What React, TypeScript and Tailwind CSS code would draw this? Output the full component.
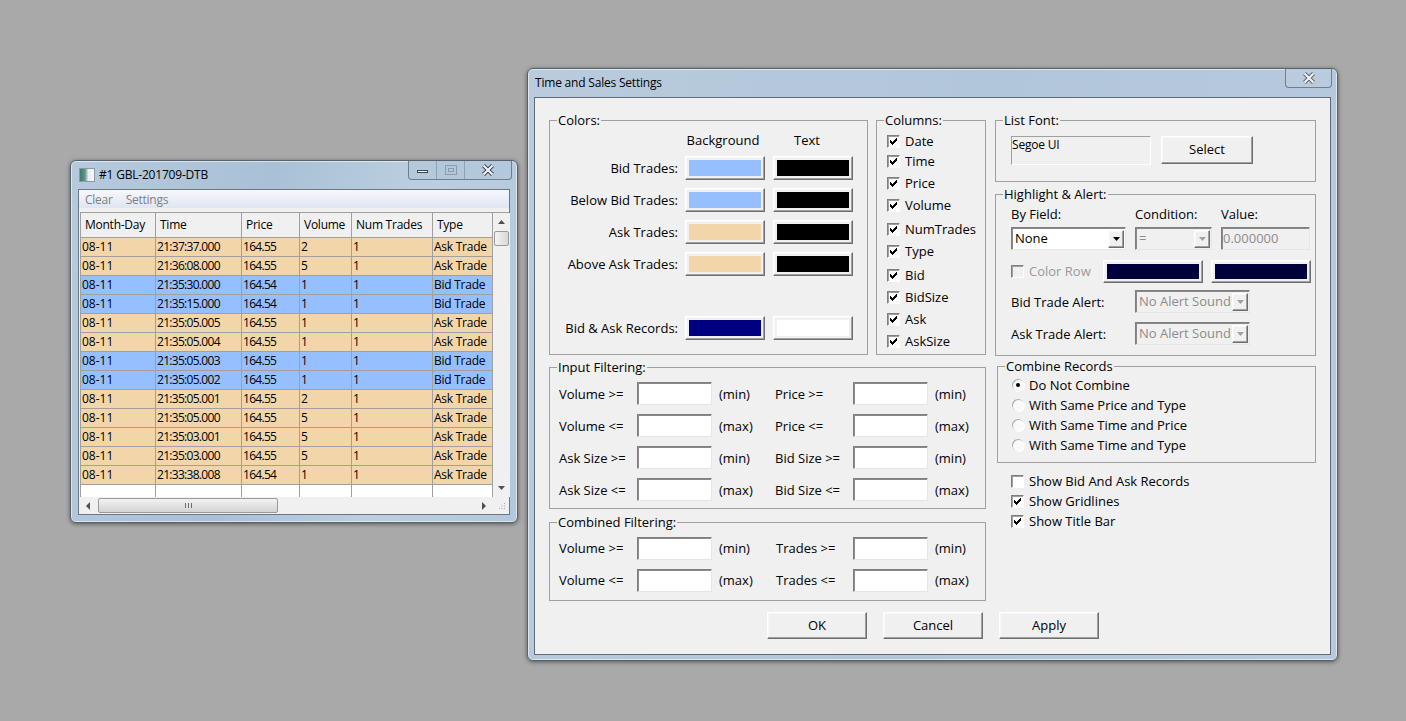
import React from 'react';

const ROWS = [
  ['08-11', '21:37:37.000', '164.55', '2', 'Ask Trade'],
  ['08-11', '21:36:08.000', '164.55', '5', 'Ask Trade'],
  ['08-11', '21:35:30.000', '164.54', '1', 'Bid Trade'],
  ['08-11', '21:35:15.000', '164.54', '1', 'Bid Trade'],
  ['08-11', '21:35:05.005', '164.55', '1', 'Ask Trade'],
  ['08-11', '21:35:05.004', '164.55', '1', 'Ask Trade'],
  ['08-11', '21:35:05.003', '164.55', '1', 'Bid Trade'],
  ['08-11', '21:35:05.002', '164.55', '1', 'Bid Trade'],
  ['08-11', '21:35:05.001', '164.55', '2', 'Ask Trade'],
  ['08-11', '21:35:05.000', '164.55', '5', 'Ask Trade'],
  ['08-11', '21:35:03.001', '164.55', '5', 'Ask Trade'],
  ['08-11', '21:35:03.000', '164.55', '5', 'Ask Trade'],
  ['08-11', '21:33:38.008', '164.54', '1', 'Ask Trade'],
];

const raised = 'border border-t-white border-l-white border-r-[#6e6e6e] border-b-[#6e6e6e] shadow-[inset_-1px_-1px_0_#a0a0a0,inset_1px_1px_0_#f8f8f8]';
const sunken = 'border border-t-[#7f7f7f] border-l-[#7f7f7f] border-r-[#e6e6e6] border-b-[#e6e6e6] shadow-[inset_1px_1px_0_#8a8a8a]';

function Group({ title, className, children }: { title: string; className: string; children?: React.ReactNode }) {
  return (
    <div className={`relative border border-[#a0a0a0] ${className}`}>
      <span className="absolute -top-[10px] left-[7px] bg-[#f0f0f0] px-[1px] leading-[18px]">{title}</span>
      {children}
    </div>
  );
}

function CheckBox({ on, disabled }: { on?: boolean; disabled?: boolean }) {
  return (
    <span className={`flex h-[13px] w-[13px] flex-none items-center justify-center border border-t-[#7f7f7f] border-l-[#7f7f7f] border-r-white border-b-white shadow-[inset_1px_1px_0_#a0a0a0] ${disabled ? 'bg-[#f0f0f0]' : 'bg-white'}`}>
      {on && (
        <svg width="9" height="9" viewBox="0 0 9 9" shapeRendering="crispEdges">
          <path d="M1 3 H2 V4 H3 V5 H4 V4 H5 V3 H6 V2 H7 V1 H8 V4 H7 V5 H6 V6 H5 V7 H4 V8 H3 V7 H2 V6 H1 Z" fill="#000" />
        </svg>
      )}
    </span>
  );
}

function CheckRow({ label, on, className }: { label: string; on?: boolean; className?: string }) {
  return (
    <div className={`flex h-[20px] items-center ${className ?? ''}`}>
      <CheckBox on={on} />
      <span className="ml-[5px] pt-[2px]">{label}</span>
    </div>
  );
}

function Radio({ label, on }: { label: string; on?: boolean }) {
  return (
    <div className="flex h-[20px] items-center">
      <span className="flex h-[12px] w-[12px] flex-none items-center justify-center rounded-full bg-[#fafafa] shadow-[inset_1px_1px_0_#b0b0b0,1px_1px_0_#ffffff]">
        {on && <span className="h-[4px] w-[4px] rounded-full bg-black" />}
      </span>
      <span className="ml-[5px] pt-[2px]">{label}</span>
    </div>
  );
}

function Swatch({ color, className }: { color: string; className?: string }) {
  return (
    <div className={`flex h-[24px] w-[80px] flex-none items-center justify-center bg-[#f0f0f0] ${raised} ${className ?? ''}`}>
      <div className={`h-[16px] w-[72px] ${color}`} />
    </div>
  );
}

function Arrow({ color }: { color: string }) {
  return (
    <svg width="7" height="4" viewBox="0 0 7 4">
      <path d="M0 0 H7 L3.5 4 Z" fill={color} />
    </svg>
  );
}

function CloseGlyph({ edge }: { edge: string }) {
  return (
    <svg width="14" height="12" viewBox="0 0 14 12">
      <path d="M2.500 1.500 L11.500 10.500 M11.500 1.500 L2.500 10.500" stroke={edge} strokeWidth="4" />
      <path d="M2.500 1.500 L11.500 10.500 M11.500 1.500 L2.500 10.500" stroke="#f4f6f8" strokeWidth="2" />
    </svg>
  );
}

function Combo({ value, className, disabled }: { value: string; className: string; disabled?: boolean }) {
  return (
    <div className={`flex h-[23px] flex-none items-center justify-between p-[1px] pl-[3px] ${sunken} ${disabled ? 'bg-[#f0f0f0] text-[#8c8c8c]' : 'bg-white'} ${className}`}>
      <span className="truncate">{value}</span>
      <span className={`flex h-[18px] w-[16px] flex-none items-center justify-center bg-[#f0f0f0] ${raised}`}>
        <Arrow color={disabled ? '#a0a0a0' : '#000'} />
      </span>
    </div>
  );
}

function Input() {
  return <div className={`h-[23px] w-[75px] flex-none bg-white ${sunken}`} />;
}

function FilterRow({ a, b, unit, className, bClass, textClass = 'pt-[2px]' }: { a: string; b: string; unit: string; className?: string; bClass?: string; textClass?: string }) {
  return (
    <div className={`flex h-[23px] items-center ${className ?? ''}`}>
      <span className={`w-[78px] flex-none ${textClass}`}>{a}</span>
      <Input />
      <span className={`ml-[7px] w-[49px] flex-none ${textClass}`}>{unit}</span>
      <span className={`ml-[7px] w-[78px] flex-none ${textClass} ${bClass ?? ''}`}>{b}</span>
      <Input />
      <span className={`ml-[7px] ${textClass}`}>{unit}</span>
    </div>
  );
}

function ColorRow({ label, bg, fg, className }: { label: string; bg: string; fg: string; className?: string }) {
  return (
    <div className={`flex h-[24px] items-center ${className ?? ''}`}>
      <span className="w-[129px] flex-none pr-[1px] pt-[2px] text-right">{label}</span>
      <Swatch color={bg} className="ml-[6px]" />
      <Swatch color={fg} className="ml-[8px]" />
    </div>
  );
}

function TextButton({ label, className }: { label: string; className: string }) {
  return <div className={`flex flex-none items-center justify-center bg-[#f0f0f0] ${raised} ${className}`}>{label}</div>;
}

const COLS = ['w-[75px]', 'w-[86px]', 'w-[58px]', 'w-[52px]', 'w-[81px]', 'w-[60px]'];
const CELLS = ['', 'tracking-[-0.7px]', 'tracking-[-0.7px]', '', '', 'tracking-[-0.25px]'];
const HEADS = ['Month-Day', 'Time', 'Price', 'Volume', 'Num Trades', 'Type'];

function TradesWindow() {
  return (
    <div className="absolute left-[70px] top-[160px] flex h-[363px] w-[448px] flex-col rounded-[6px] border border-[#56626e] bg-[linear-gradient(100deg,#b7cadd,#a9c0d6_40%,#bccfe0_70%,#b3c8dc)] shadow-[0_1px_4px_rgba(0,0,0,0.5),inset_0_0_0_1px_rgba(255,255,255,0.55)]">
      <div className="flex h-[28px] flex-none items-center pl-[8px] pr-[5px] text-[12px] text-black">
        <div className="h-[14px] w-[16px] flex-none border border-[#8c99a5] bg-[linear-gradient(90deg,#3e7a6e_0%,#5f9486_35%,#e6eef2_60%,#f6f8f8_100%)]" />
        <span className="ml-[4px] mb-[1px] tracking-[-0.2px]">#1 GBL-201709-DTB</span>
        <div className="ml-auto flex h-[19px] w-[104px] self-start rounded-b-[4px] border border-t-0 border-[#6d7f90] bg-[#b4c8db]">
          <div className="flex w-[28px] items-center justify-center border-r border-[#8fa3b5]">
            <div className="mt-[3px] h-[3px] w-[11px] border border-[#3b4652] bg-white" />
          </div>
          <div className="flex w-[28px] items-center justify-center border-r border-[#8fa3b5]">
            <div className="flex h-[10px] w-[12px] items-center justify-center border border-[#8a9cae]">
              <div className="h-[4px] w-[6px] border border-[#8a9cae]" />
            </div>
          </div>
          <div className="flex flex-1 items-center justify-center">
            <CloseGlyph edge="#3b4652" />
          </div>
        </div>
      </div>
      <div className="mx-[7px] flex h-[326px] flex-col border border-[#6c7783] bg-[#f0f0f0] text-[12px] text-black">
        <div className="flex h-[18px] flex-none items-center bg-[linear-gradient(#f6f8fc,#dfe5f3)] pl-[6px] pt-[2px] tracking-[-0.25px] text-[#7f7f7f]">
          <span>Clear</span>
          <span className="ml-[13px]">Settings</span>
        </div>
        <div className="mt-[4px] ml-[1px] flex h-[285px] flex-none border-t border-l border-[#a0a0a0]">
          <div className="flex w-[412px] flex-none flex-col bg-white">
            <div className="flex h-[25px] flex-none border-b border-[#a0a0a0] bg-[#f0f0f0] tracking-[-0.25px]">
              {HEADS.map((h, i) => (
                <div key={h} className={`flex flex-none items-center overflow-hidden border-r border-[#a0a0a0] pl-[4px] ${COLS[i]}`}>{h}</div>
              ))}
            </div>
            {ROWS.map((r, n) => (
              <div key={n} className={`flex h-[19px] flex-none border-b border-[#a0a0a0] ${r[4] === 'Bid Trade' ? 'bg-[#96bfff]' : 'bg-[#f2d6a9]'}`}>
                {[r[0], r[1], r[2], r[3], '1', r[4]].map((c, i) => (
                  <div key={i} className={`flex flex-none items-center overflow-hidden whitespace-nowrap border-r border-[#a0a0a0] pl-[1px] ${COLS[i]} ${CELLS[i]}`}>{c}</div>
                ))}
              </div>
            ))}
            <div className="flex flex-1">
              {COLS.map(c => (
                <div key={c} className={`flex-none border-r border-[#a0a0a0] ${c}`} />
              ))}
            </div>
          </div>
          <div className="flex w-[17px] flex-none flex-col items-center bg-[#f0f0f0]">
            <div className="mt-[7px] rotate-180"><Arrow color="#505050" /></div>
            <div className="mt-[7px] h-[15px] w-[15px] rounded-[2px] border border-[#9a9a9a] bg-[linear-gradient(90deg,#f4f4f4,#d8d8d8)]" />
            <div className="mt-auto mb-[7px]"><Arrow color="#505050" /></div>
          </div>
        </div>
        <div className="ml-[1px] flex h-[17px] flex-none items-center bg-[#f0f0f0]">
          <span className="ml-[6px] h-0 w-0 border-y-[4px] border-r-[4px] border-y-transparent border-r-[#505050]" />
          <div className="ml-[8px] flex h-[15px] w-[180px] flex-none items-center justify-center rounded-[2px] border border-[#9a9a9a] bg-[linear-gradient(#f2f2f2,#d4d4d4)]">
            <div className="h-[5px] w-[7px] bg-[repeating-linear-gradient(90deg,#6a6a6a_0_1px,transparent_1px_3px)]" />
          </div>
          <span className="ml-[204px] h-0 w-0 border-y-[4px] border-l-[4px] border-y-transparent border-l-[#505050]" />
          <svg className="ml-[12px]" width="8" height="8" viewBox="0 0 8 8">
            <path d="M6 1 h1 v1 h-1 Z M3.500 3.500 h1 v1 h-1 Z M6 3.500 h1 v1 h-1 Z M1 6 h1 v1 h-1 Z M3.500 6 h1 v1 h-1 Z M6 6 h1 v1 h-1 Z" fill="#a8a8a8" />
          </svg>
        </div>
      </div>
    </div>
  );
}

const COLUMNS: [string, string][] = [
  ['Date', ''], ['Time', ''], ['Price', 'mt-[2px]'], ['Volume', 'mt-[2px]'], ['NumTrades', 'mt-[4px]'],
  ['Type', 'mt-[2px]'], ['Bid', 'mt-[4px]'], ['BidSize', 'mt-[2px]'], ['Ask', 'mt-[2px]'], ['AskSize', 'mt-[2px]'],
];

function SettingsDialog() {
  return (
    <div className="absolute left-[527px] top-[68px] flex h-[593px] w-[811px] flex-col rounded-[6px] border border-[#56626e] bg-[linear-gradient(100deg,#b9cbdd,#b2c6da_50%,#b7cadd)] shadow-[0_1px_4px_rgba(0,0,0,0.5),inset_0_0_0_1px_rgba(255,255,255,0.55)]">
      <div className="flex h-[28px] flex-none items-center pl-[7px] text-[12px] text-black">
        <span className="tracking-[-0.2px]">Time and Sales Settings</span>
        <div className="ml-auto mr-[5px] flex h-[19px] w-[47px] flex-none self-start items-center justify-center rounded-b-[4px] border border-t-0 border-[#6d7f90] bg-[#b9cbdc]">
          <CloseGlyph edge="#5b6673" />
        </div>
      </div>
      <div className="mx-[6px] flex h-[558px] flex-col border border-[#5f6b78] bg-[#f0f0f0] pl-[14px] pt-[22px] text-[13px] text-black">
        <div className="flex">
          <div className="flex w-[437px] flex-none flex-col">
            <div className="flex">
              <Group title="Colors:" className="h-[235px] w-[319px] flex-none">
                <div className="mt-[9px] flex h-[20px] pt-[1px]">
                  <span className="ml-[133px] w-[80px] text-center">Background</span>
                  <span className="ml-[4px] w-[80px] text-center">Text</span>
                </div>
                <ColorRow label="Bid Trades:" bg="bg-[#96bfff]" fg="bg-black" className="mt-[6px]" />
                <ColorRow label="Below Bid Trades:" bg="bg-[#96bfff]" fg="bg-black" className="mt-[8px]" />
                <ColorRow label="Ask Trades:" bg="bg-[#f2d6a9]" fg="bg-black" className="mt-[8px]" />
                <ColorRow label="Above Ask Trades:" bg="bg-[#f2d6a9]" fg="bg-black" className="mt-[8px]" />
                <ColorRow label="Bid & Ask Records:" bg="bg-[#000080]" fg="bg-white" className="mt-[40px]" />
              </Group>
              <Group title="Columns:" className="ml-[8px] h-[235px] w-[110px] flex-none pl-[10px] pt-[10px]">
                {COLUMNS.map(([label, mt]) => (
                  <CheckRow key={label} label={label} on className={mt} />
                ))}
              </Group>
            </div>
            <Group title="Input Filtering:" className="mt-[12px] h-[142px] pl-[9px] pt-[14px]">
              <FilterRow a="Volume >=" b="Price >=" unit="(min)" />
              <FilterRow a="Volume <=" b="Price <=" unit="(max)" className="mt-[9px]" />
              <FilterRow a="Ask Size >=" b="Bid Size >=" unit="(min)" className="mt-[9px]" />
              <FilterRow a="Ask Size <=" b="Bid Size <=" unit="(max)" className="mt-[9px]" />
            </Group>
            <Group title="Combined Filtering:" className="mt-[13px] h-[79px] pl-[9px] pt-[14px]">
              <FilterRow a="Volume >=" b="Trades >=" unit="(min)" bClass="pl-[1px]" textClass="" />
              <FilterRow a="Volume <=" b="Trades <=" unit="(max)" bClass="pl-[1px]" textClass="" className="mt-[9px]" />
            </Group>
          </div>
          <div className="ml-[9px] flex w-[321px] flex-none flex-col">
            <Group title="List Font:" className="flex h-[62px] pl-[15px] pt-[15px]">
              <div className="h-[29px] w-[140px] flex-none border border-t-[#a0a0a0] border-l-[#a0a0a0] border-r-white border-b-white text-[12px] leading-[16px] tracking-[-0.2px]">Segoe UI</div>
              <TextButton label="Select" className="ml-[10px] h-[28px] w-[92px]" />
            </Group>
            <Group title="Highlight & Alert:" className="mt-[12px] h-[162px] pl-[15px] pt-[9px]">
              <div className="flex h-[20px] items-center pt-[2px]">
                <span className="w-[124px] flex-none">By Field:</span>
                <span className="w-[86px] flex-none">Condition:</span>
                <span>Value:</span>
              </div>
              <div className="mt-[3px] flex">
                <Combo value="None" className="w-[115px]" />
                <Combo value="=" disabled className="ml-[9px] w-[77px]" />
                <div className={`ml-[9px] flex h-[23px] w-[89px] flex-none items-center bg-[#f0f0f0] pl-[1px] text-[#8c8c8c] ${sunken}`}>0.000000</div>
              </div>
              <div className="mt-[10px] flex h-[23px] items-center">
                <CheckBox disabled />
                <span className="ml-[5px] w-[74px] flex-none text-[#9a9a9a]">Color Row</span>
                <div className={`flex h-[23px] w-[100px] flex-none items-center justify-center bg-[#f0f0f0] ${raised}`}><div className="h-[15px] w-[92px] bg-[#00003c]" /></div>
                <div className={`ml-[8px] flex h-[23px] w-[100px] flex-none items-center justify-center bg-[#f0f0f0] ${raised}`}><div className="h-[15px] w-[92px] bg-[#00003c]" /></div>
              </div>
              <div className="mt-[7px] flex h-[23px] items-center">
                <span className="w-[124px] flex-none pt-[2px]">Bid Trade Alert:</span>
                <Combo value="No Alert Sound" disabled className="w-[115px]" />
              </div>
              <div className="mt-[9px] flex h-[23px] items-center">
                <span className="w-[124px] flex-none pt-[2px]">Ask Trade Alert:</span>
                <Combo value="No Alert Sound" disabled className="w-[115px]" />
              </div>
            </Group>
            <Group title="Combine Records" className="ml-[2px] mt-[10px] h-[97px] pl-[14px] pt-[8px]">
              <Radio label="Do Not Combine" on />
              <Radio label="With Same Price and Type" />
              <Radio label="With Same Time and Price" />
              <Radio label="With Same Time and Type" />
            </Group>
            <div className="mt-[8px] pl-[16px]">
              <CheckRow label="Show Bid And Ask Records" />
              <CheckRow label="Show Gridlines" on />
              <CheckRow label="Show Title Bar" on />
            </div>
          </div>
        </div>
        <div className="ml-[218px] mt-[11px] flex gap-[16px]">
          <TextButton label="OK" className="h-[27px] w-[100px]" />
          <TextButton label="Cancel" className="h-[27px] w-[100px]" />
          <TextButton label="Apply" className="h-[27px] w-[100px]" />
        </div>
      </div>
    </div>
  );
}

export default function App() {
  return (
    <div className="relative h-[721px] w-[1406px] overflow-hidden bg-[#a9a9a9] font-['Open_Sans',sans-serif]">
      <TradesWindow />
      <SettingsDialog />
    </div>
  );
}
